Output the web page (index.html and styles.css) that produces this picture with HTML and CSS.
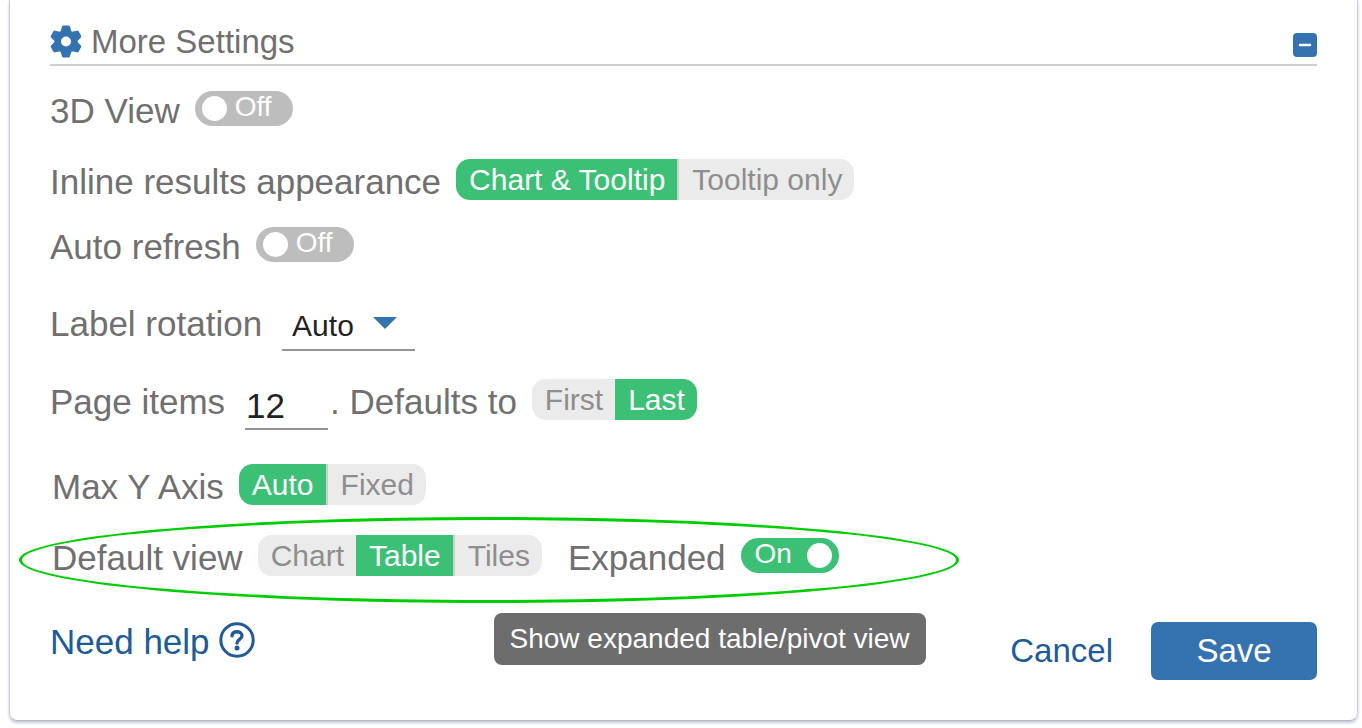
FILE: index.html
```html
<!DOCTYPE html>
<html lang="en">
<head>
    <meta charset="UTF-8">
    <meta name="viewport" content="width=device-width, initial-scale=1.0">
    <title>More Settings</title>
    <link rel="stylesheet" href="styles.css">
</head>
<body>
    <form class="panel">
        <div class="panel-header">
            <svg class="gear" viewBox="0 0 32 33" aria-hidden="true">
                <g fill="#3572b0" stroke="#3572b0" stroke-width="3" stroke-linejoin="round">
                    <circle cx="16" cy="16.5" r="10"/>
                    <path d="M13.500 2h5l1.500 5h-8zM12 26h8l-1.500 5h-5z"/>
                    <path d="M13.500 2h5l1.500 5h-8zM12 26h8l-1.500 5h-5z" transform="rotate(60 16 16.5)"/>
                    <path d="M13.500 2h5l1.500 5h-8zM12 26h8l-1.500 5h-5z" transform="rotate(120 16 16.5)"/>
                </g>
                <circle cx="16" cy="16.5" r="5" fill="#fff"/>
            </svg>
            <h2>More Settings</h2>
            <button type="button" class="collapse" aria-label="Collapse">
                <svg viewBox="0 0 24 24"><path d="M7 12h10" stroke="#fff" stroke-width="2.5" stroke-linecap="round"/></svg>
            </button>
        </div>

        <div class="row">
            <label class="text" for="view3d">3D View</label>
            <label class="toggle"><input type="checkbox" id="view3d"><i></i><span>Off</span></label>
        </div>

        <div class="row space-m" role="radiogroup" aria-labelledby="inlineLabel">
            <span class="text" id="inlineLabel">Inline results appearance</span>
            <div class="segments">
                <label><input type="radio" name="inline" checked><span>Chart &amp; Tooltip</span></label>
                <label><input type="radio" name="inline"><span>Tooltip only</span></label>
            </div>
        </div>

        <div class="row">
            <label class="text" for="autoRefresh">Auto refresh</label>
            <label class="toggle"><input type="checkbox" id="autoRefresh"><i></i><span>Off</span></label>
        </div>

        <div class="row space-l">
            <label class="text" for="rotation">Label rotation</label>
            <div class="dropdown">
                <select id="rotation">
                    <option>Auto</option>
                </select>
            </div>
        </div>

        <div class="row space-m" role="radiogroup" aria-labelledby="defaultsLabel">
            <label class="text" for="pageItems">Page items</label>
            <input type="text" class="number" id="pageItems" value="12">
            <span class="text" id="defaultsLabel">. Defaults to</span>
            <div class="segments">
                <label><input type="radio" name="defaults"><span>First</span></label>
                <label><input type="radio" name="defaults" checked><span>Last</span></label>
            </div>
        </div>

        <div class="row space-l indent" role="radiogroup" aria-labelledby="axisLabel">
            <span class="text" id="axisLabel">Max Y Axis</span>
            <div class="segments">
                <label><input type="radio" name="axis" checked><span>Auto</span></label>
                <label><input type="radio" name="axis"><span>Fixed</span></label>
            </div>
        </div>

        <div class="row space-m indent highlight" role="radiogroup" aria-labelledby="viewLabel">
            <span class="text" id="viewLabel">Default view</span>
            <div class="segments">
                <label><input type="radio" name="view"><span>Chart</span></label>
                <label><input type="radio" name="view" checked><span>Table</span></label>
                <label><input type="radio" name="view"><span>Tiles</span></label>
            </div>
            <label class="text next" for="expanded">Expanded</label>
            <label class="toggle on">
                <input type="checkbox" id="expanded" aria-describedby="expandedTip" checked><span>On</span><i></i>
                <span class="tooltip" id="expandedTip" role="tooltip">Show expanded table/pivot view</span>
            </label>
        </div>

        <div class="panel-footer">
            <a class="help" href="#help">Need help
                <svg viewBox="0 0 36 36" fill="none" stroke="#205b99" stroke-width="3" stroke-linecap="round" aria-hidden="true">
                    <circle cx="18" cy="18" r="16.2"/>
                    <path d="M13 13.8c.3-2.6 2.300-4 5-4s5 1.500 5 4c0 3.400-5 3.700-5 7.200" stroke-width="3.4"/>
                    <circle cx="18" cy="26" r="2.500" fill="#205b99" stroke="none"/>
                </svg>
            </a>
            <a class="cancel" href="#cancel">Cancel</a>
            <button type="submit" class="save">Save</button>
        </div>
    </form>
</body>
</html>
```

FILE: styles.css
```css
* {
    box-sizing: border-box;
}
body {
    margin: 0;
    background: #fff;
    font-family: Arial, "Liberation Sans", sans-serif;
    color: #707070;
}
.panel {
    margin: 0 4px 8px 9px;
    padding: 23px 40px 40px;
    border: 1px solid #c9cdda;
    border-top: none;
    border-bottom-color: #b0b7c6;
    border-radius: 0 0 8px 8px;
    box-shadow: 0 2px 3px rgba(60, 75, 120, 0.3);
}
.panel-header {
    display: flex;
    align-items: center;
    padding-bottom: 3px;
    border-bottom: 2px solid #d0d0d0;
}
.gear {
    width: 32px;
    height: 33px;
    margin-bottom: 2px;
}
.panel-header h2 {
    flex: 1;
    margin: 0 0 0 9px;
    font-size: 33px;
    font-weight: normal;
    line-height: 38px;
}
.collapse {
    width: 24px;
    height: 24px;
    margin-top: 6px;
    padding: 0;
    border: none;
    border-radius: 4px;
    background: #3572b0;
}
.collapse svg {
    display: block;
}

/* setting rows */
.row {
    display: flex;
    align-items: flex-start;
    width: fit-content;
    margin-top: 22px;
}
.space-m {
    margin-top: 28px;
}
.space-l {
    margin-top: 34px;
}
.indent {
    padding-left: 2px;
}
.text {
    padding-top: 3px;
    font-size: 35px;
    line-height: 40px;
    white-space: nowrap;
}
.next {
    margin-left: 26px;
}

/* on / off switch */
.toggle {
    position: relative;
    display: flex;
    gap: 8px;
    width: 98px;
    height: 35px;
    margin: 3px 0 0 15px;
    padding: 0 7px;
    border-radius: 18px;
    background: #bdbdbd;
    color: #fff;
    font-size: 28px;
    line-height: 31px;
}
.toggle.on {
    justify-content: space-between;
    padding-left: 14px;
    background: #3bc075;
}
.toggle input,
.segments input {
    position: absolute;
    opacity: 0;
    margin: 0;
}
.toggle i {
    width: 25px;
    height: 25px;
    margin-top: 5px;
    border-radius: 50%;
    background: #fff;
}
.tooltip {
    position: absolute;
    top: 75px;
    right: -87px;
    padding: 0 16px;
    border-radius: 8px;
    background: #6d6d6d;
    font-size: 28px;
    line-height: 52px;
    white-space: nowrap;
}

/* segmented buttons */
.segments {
    display: flex;
    margin-left: 15px;
    border-radius: 14px;
    overflow: hidden;
    font-size: 30px;
    line-height: 41px;
    color: #8e8e8e;
}
.segments label {
    position: relative;
}
.segments span {
    display: block;
    padding: 0 12px 0 13px;
    background: #ebebeb;
    white-space: nowrap;
}
.segments label + label span {
    border-left: 2px solid #cfcfcf;
}
.segments label input:checked + span {
    border-left: none;
    background: #3bc075;
    color: #fff;
}

.dropdown {
    position: relative;
    margin-left: 20px;
}
.dropdown::after {
    content: "";
    position: absolute;
    top: 16px;
    right: 18px;
    border: 12px solid transparent;
    border-top-color: #3572b0;
    border-bottom: none;
    pointer-events: none;
}
.dropdown select {
    display: block;
    appearance: none;
    width: 133px;
    height: 50px;
    padding: 0 10px;
    border: none;
    border-bottom: 2px solid #949494;
    border-radius: 0;
    background: none;
    font: 30px Arial, "Liberation Sans", sans-serif;
    color: #222;
}
.number {
    width: 83px;
    height: 51px;
    margin: 0 2px 0 20px;
    padding: 5px 0 0 1px;
    border: none;
    border-bottom: 2px solid #949494;
    font: 35px Arial, "Liberation Sans", sans-serif;
    color: #222;
}

/* green ring around the row */
.highlight {
    position: relative;
}
.highlight::before {
    content: "";
    position: absolute;
    top: -18px;
    right: -120px;
    bottom: -25px;
    left: -31px;
    border: 3px solid #00cc00;
    border-radius: 50%;
    pointer-events: none;
}

.panel-footer {
    display: flex;
    align-items: flex-start;
    margin-top: 44px;
    color: #205b99;
}
.panel-footer a {
    color: inherit;
    text-decoration: none;
}
.help {
    display: flex;
    gap: 9px;
    margin-right: auto;
    font-size: 35px;
    line-height: 40px;
}
.help svg {
    width: 36px;
    height: 36px;
}
.cancel {
    margin-right: 38px;
    font-size: 33px;
    line-height: 58px;
}
.save {
    width: 166px;
    height: 58px;
    border: none;
    border-radius: 7px;
    background: #3572b0;
    color: #fff;
    font: 33px Arial, "Liberation Sans", sans-serif;
}
```
